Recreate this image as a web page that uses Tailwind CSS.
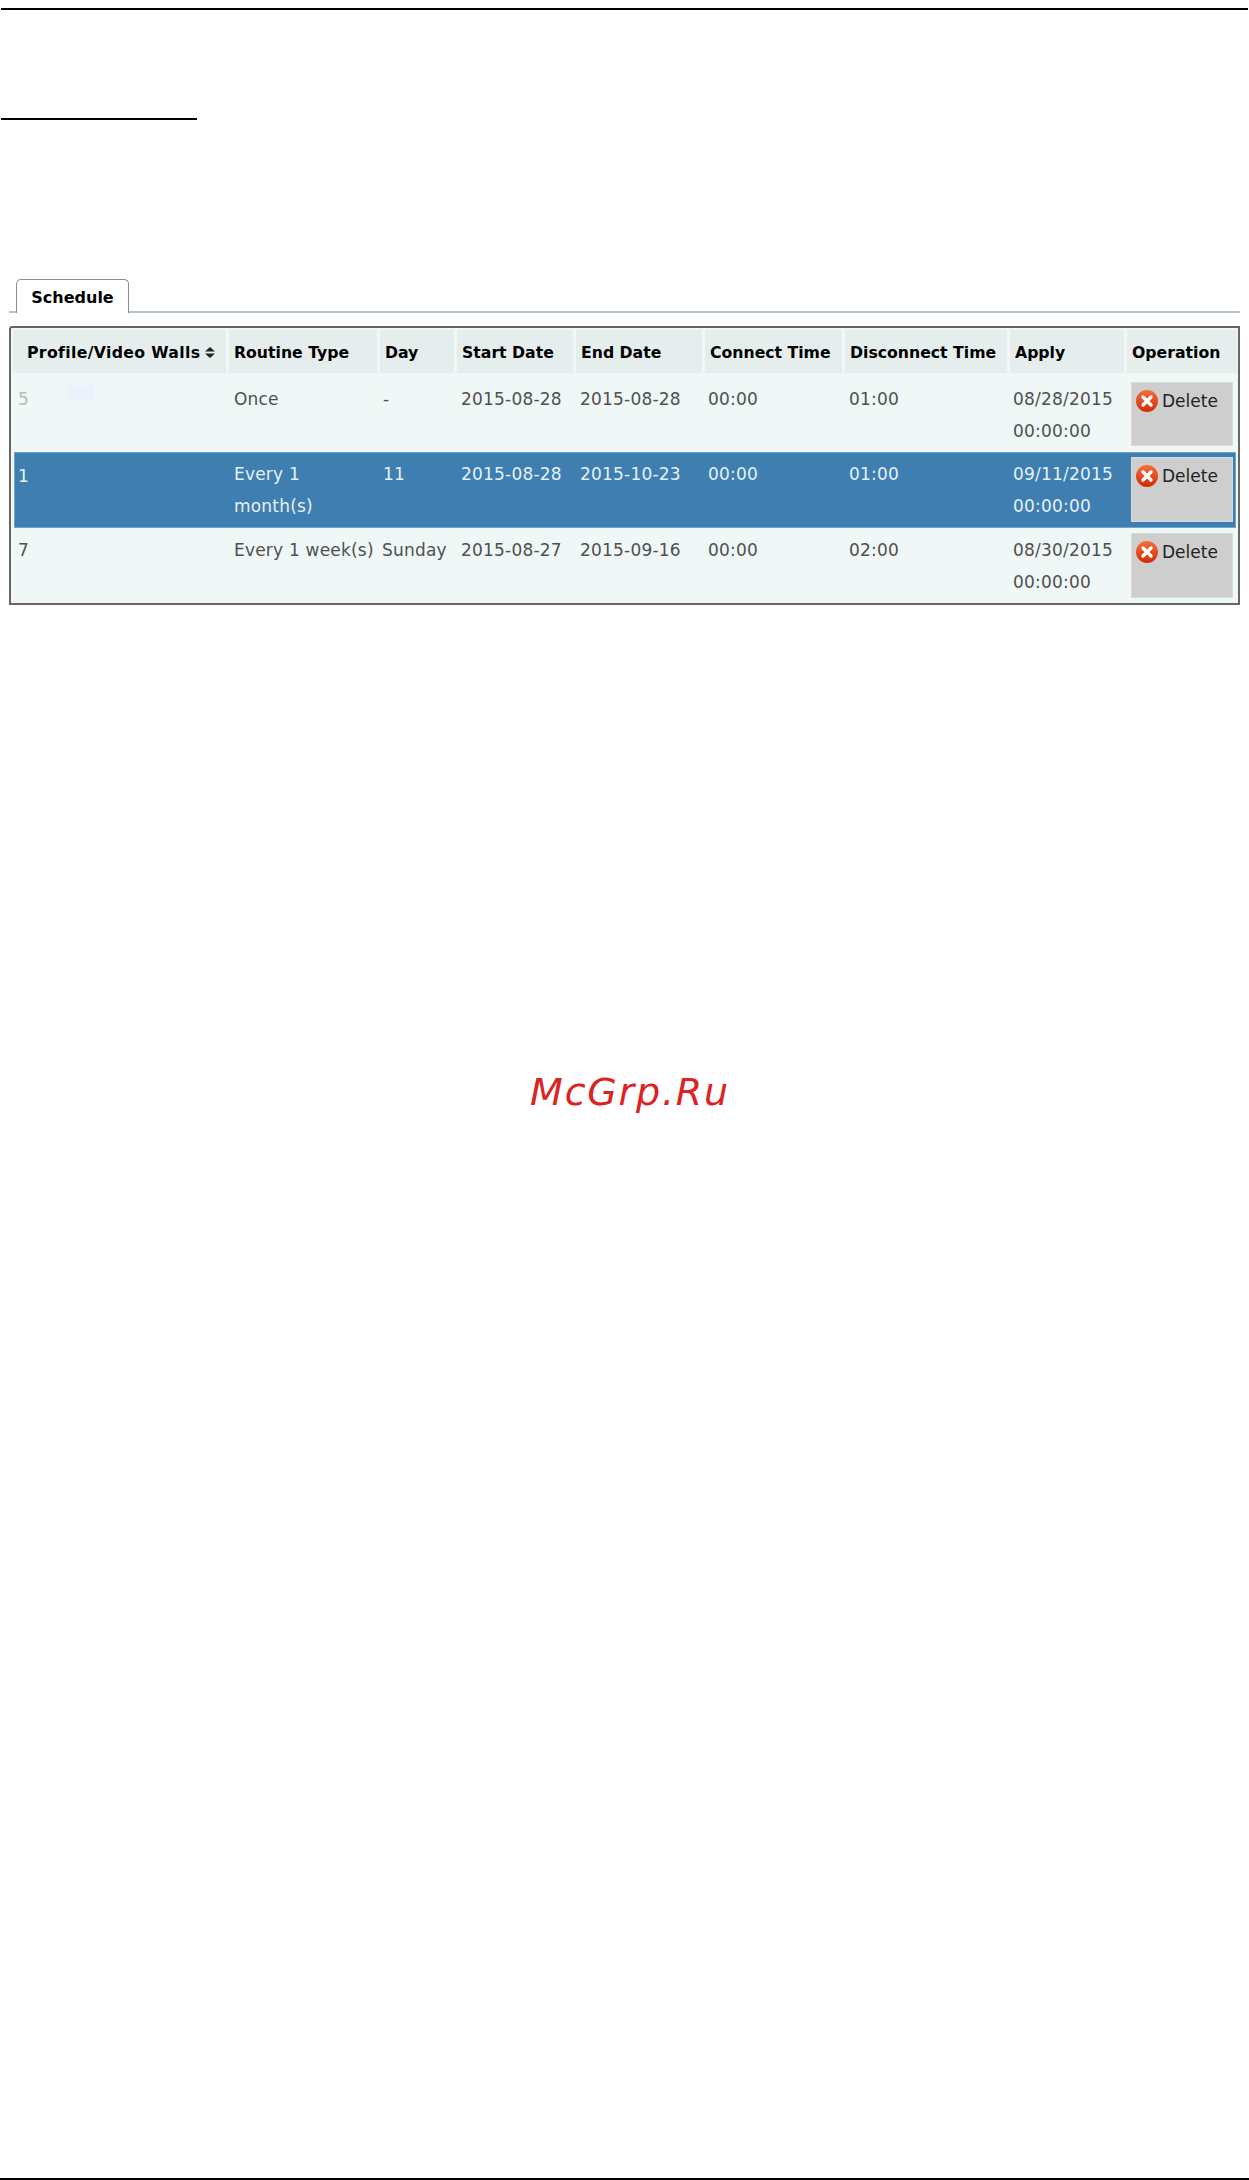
<!DOCTYPE html>
<html lang="en">
<head>
    <meta charset="UTF-8">
    <title>Schedule</title>
    <script src="https://cdn.jsdelivr.net/npm/@tailwindcss/browser@4"></script>
</head>
<body class="bg-white h-[2180px] flex flex-col font-['DejaVu_Sans',sans-serif]">
    <!-- page rules -->
    <div class="mt-[8px] ml-px mr-px h-[2px] bg-black"></div>
    <div class="mt-[108px] ml-px w-[196px] h-[2px] bg-black"></div>

    <!-- tab bar -->
    <div class="mt-[159px] mx-[9px] h-[34px] border-b-2 border-[#b5c3cf] flex items-end">
        <div class="ml-[7px] -mb-[2px] w-[113px] h-[34px] pt-[2px] bg-white border border-b-0 border-[#7f91a1] rounded-t-[5px] flex items-center justify-center text-[16px] leading-none font-bold text-black">Schedule</div>
    </div>

    <!-- schedule table -->
    <div class="mt-[13px] mx-[9px] h-[279px] border-2 border-[#666] rounded-tl-[3px] bg-[#eff7f7] px-[2px] pt-[2px] text-[#505050] text-[17px] tracking-[0.2px] leading-[32px]">
        <div class="grid grid-cols-[216px_151px_77px_119px_129px_140px_165px_117px_110px] h-[43px] text-[15.7px] tracking-normal font-bold text-black">
            <div class="mr-[3px] bg-[#e6eeed] pl-[14px] pt-[2px] flex items-center gap-[5px]"><span class="tracking-[0.35px]">Profile/Video Walls</span>
                <svg class="w-[10px] h-[11px]" viewBox="0 0 10 11"><path d="M5 0L10 4.5H0zM5 11L0 6.5H10z" fill="#222"/></svg>
            </div>
            <div class="mr-[3px] bg-[#e6eeed] pl-[5px] pt-[2px] flex items-center">Routine Type</div>
            <div class="mr-[3px] bg-[#e6eeed] pl-[5px] pt-[2px] flex items-center">Day</div>
            <div class="mr-[3px] bg-[#e6eeed] pl-[5px] pt-[2px] flex items-center">Start Date</div>
            <div class="mr-[3px] bg-[#e6eeed] pl-[5px] pt-[2px] flex items-center">End Date</div>
            <div class="mr-[3px] bg-[#e6eeed] pl-[5px] pt-[2px] flex items-center">Connect Time</div>
            <div class="mr-[3px] bg-[#e6eeed] pl-[5px] pt-[2px] flex items-center">Disconnect Time</div>
            <div class="mr-[3px] bg-[#e6eeed] pl-[5px] pt-[2px] flex items-center">Apply</div>
            <div class="bg-[#e6eeed] pl-[5px] pt-[2px] flex items-center">Operation</div>
        </div>

        <div class="grid grid-cols-[216px_151px_77px_119px_129px_140px_165px_117px_110px] h-[79px] pt-[10px]">
            <div class="pl-[5px] flex items-start text-[#bbb]"><span>5</span><span class="ml-[39px] mt-[2px] w-[26px] h-[15px] bg-[#eaf3fb]"></span></div>
            <div class="pl-[5px]">Once</div>
            <div class="pl-[3px]">-</div>
            <div class="pl-[4px]">2015-08-28</div>
            <div class="pl-[4px]">2015-08-28</div>
            <div class="pl-[3px]">00:00</div>
            <div class="pl-[4px]">01:00</div>
            <div class="pl-[3px]">08/28/2015<br>00:00:00</div>
            <div class="pl-[4px] pr-[4px] -mt-px">
                <div class="h-[64px] bg-[#cecece] border border-[#dadada] flex items-start pl-[4px] pt-[5px] gap-[4px] text-[#222] tracking-normal leading-[26px]">
                    <svg class="w-[22px] h-[22px] mt-[2px] shrink-0" viewBox="0 0 22 22"><defs><linearGradient id="del" x1="0" y1="0" x2="0" y2="1"><stop offset="0" stop-color="#f4703a"/><stop offset="1" stop-color="#d42a08"/></linearGradient></defs><circle cx="11" cy="11" r="11" fill="url(#del)"/><path d="M7 7L15 15M15 7L7 15" stroke="#fff" stroke-width="3.4" stroke-linecap="round"/></svg>
                    Delete
                </div>
            </div>
        </div>

        <div class="grid grid-cols-[215px_151px_77px_119px_129px_140px_165px_117px_109px] ml-px h-[76px] pt-[6px] bg-[#3f7eb0] shadow-[inset_0_0_0_1px_#6fa4cb] text-[#e6f0f8]">
            <div class="pl-[4px] pt-[2px]">1</div>
            <div class="pl-[5px]">Every 1<br>month(s)</div>
            <div class="pl-[3px]">11</div>
            <div class="pl-[4px]">2015-08-28</div>
            <div class="pl-[4px]">2015-10-23</div>
            <div class="pl-[3px]">00:00</div>
            <div class="pl-[4px]">01:00</div>
            <div class="pl-[3px]">09/11/2015<br>00:00:00</div>
            <div class="pl-[4px] pr-[3px] -mt-px">
                <div class="h-[65px] bg-[#cecece] border border-[#dadada] flex items-start pl-[4px] pt-[5px] gap-[4px] text-[#222] tracking-normal leading-[26px]">
                    <svg class="w-[22px] h-[22px] mt-[2px] shrink-0" viewBox="0 0 22 22"><circle cx="11" cy="11" r="11" fill="url(#del)"/><path d="M7 7L15 15M15 7L7 15" stroke="#fff" stroke-width="3.4" stroke-linecap="round"/></svg>
                    Delete
                </div>
            </div>
        </div>

        <div class="grid grid-cols-[216px_151px_77px_119px_129px_140px_165px_117px_110px] h-[75px] pt-[6px]">
            <div class="pl-[5px]">7</div>
            <div class="pl-[5px] whitespace-nowrap">Every 1 week(s)</div>
            <div class="pl-[2px]">Sunday</div>
            <div class="pl-[4px]">2015-08-27</div>
            <div class="pl-[4px]">2015-09-16</div>
            <div class="pl-[3px]">00:00</div>
            <div class="pl-[4px]">02:00</div>
            <div class="pl-[3px]">08/30/2015<br>00:00:00</div>
            <div class="pl-[4px] pr-[4px] -mt-px">
                <div class="h-[65px] bg-[#cecece] border border-[#dadada] flex items-start pl-[4px] pt-[5px] gap-[4px] text-[#222] tracking-normal leading-[26px]">
                    <svg class="w-[22px] h-[22px] mt-[2px] shrink-0" viewBox="0 0 22 22"><circle cx="11" cy="11" r="11" fill="url(#del)"/><path d="M7 7L15 15M15 7L7 15" stroke="#fff" stroke-width="3.4" stroke-linecap="round"/></svg>
                    Delete
                </div>
            </div>
        </div>
    </div>

    <!-- watermark -->
    <div class="mt-[464px] pl-[11px] text-center italic text-[38px] leading-[46px] tracking-[1.8px] text-[#dd2222]">McGrp.Ru</div>

    <!-- bottom rule -->
    <div class="mt-auto h-[2px] bg-black"></div>
</body>
</html>
